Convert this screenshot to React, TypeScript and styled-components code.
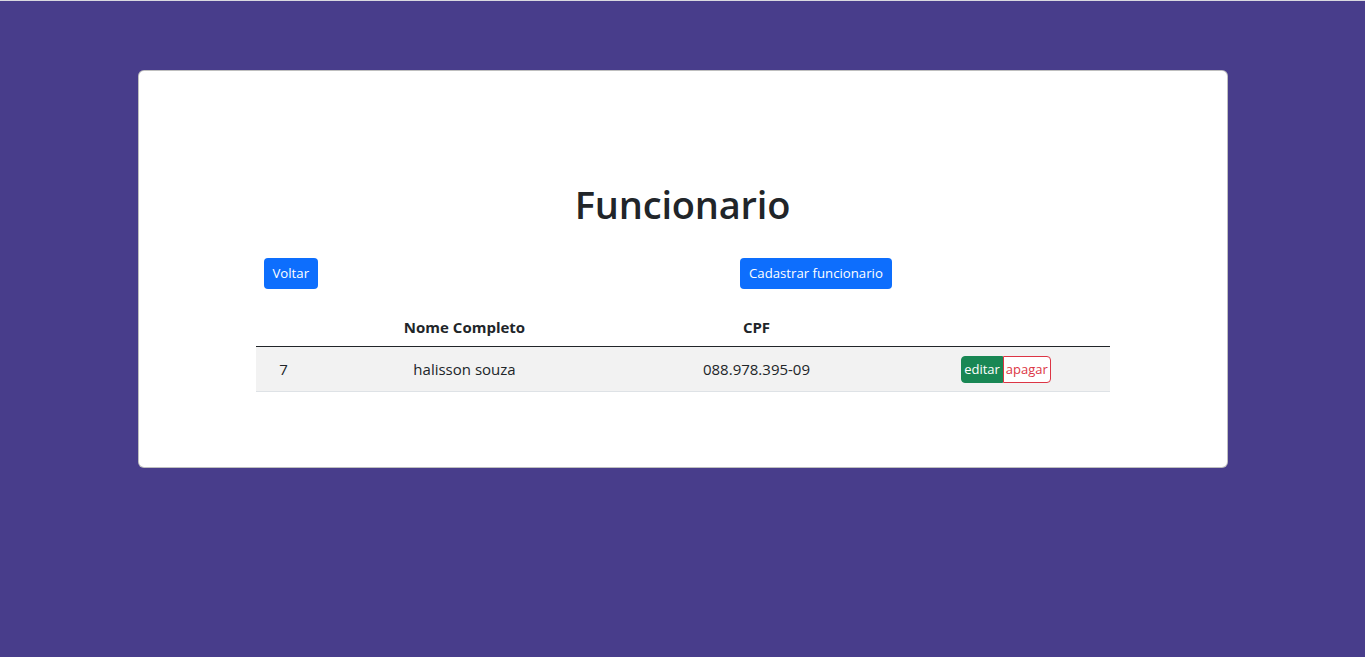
import React from 'react';
import styled, { createGlobalStyle } from 'styled-components';

const GlobalStyle = createGlobalStyle`
    html, body {
        margin: 0;
        padding: 0;
    }
    body {
        background: #483d8b;
        border-top: 1px solid #d9d9e0;
        min-height: 656px;
        font-family: "Open Sans", "Noto Sans", sans-serif;
        color: #212529;
        font-size: 16px;
    }
`;

const Page = styled.div`
    display: flex;
    justify-content: center;
    padding-top: 69px;
`;

const Card = styled.section`
    width: 1090px;
    height: 398px;
    box-sizing: border-box;
    background: white;
    border: 1px solid rgba(0, 0, 0, .25);
    border-radius: 6px;
    display: flex;
    flex-direction: column;
    align-items: center;
    padding-top: 111px;
`;

const Heading = styled.h1`
    margin: 0;
    font-size: 38px;
    font-weight: 600;
    line-height: 1.2;
    letter-spacing: -0.2px;
`;

const Inner = styled.div`
    width: 854px;
    margin-top: 30px;
`;

const Toolbar = styled.div`
    display: flex;
    align-items: center;
    padding-left: 8px;
`;

const Button = styled.button<{ offset?: number }>`
    border: none;
    background: #0d6efd;
    color: white;
    font-family: inherit;
    font-size: 13.2px;
    height: 31px;
    padding: 0 9px;
    border-radius: 4px;
    cursor: pointer;
    margin-left: ${props => props.offset ?? 0}px;
`;

const Table = styled.table`
    width: 100%;
    border-collapse: collapse;
    margin-top: 20px;
    table-layout: fixed;
`;

const HeadCell = styled.th<{ width: number }>`
    width: ${props => props.width}px;
    font-weight: 700;
    font-size: 15px;
    text-align: center;
    padding: 8px 0 9px;
    border-bottom: 1px solid #212529;
`;

const Row = styled.tr`
    background: #f2f2f2;
    border-bottom: 1px solid #dee2e6;
`;

const Cell = styled.td`
    text-align: center;
    font-size: 15px;
    height: 44px;
    padding: 0;
    vertical-align: middle;
`;

const ActionGroup = styled.div`
    display: inline-flex;
    margin-left: 7px;
    margin-top: 1px;
`;

const ActionButton = styled.button<{ tone: 'edit' | 'delete' }>`
    font-family: inherit;
    font-size: 13px;
    height: 27px;
    padding: 0 2px;
    cursor: pointer;
    border: 1px solid ${props => props.tone === 'edit' ? '#198754' : '#dc3545'};
    background: ${props => props.tone === 'edit' ? '#198754' : 'white'};
    color: ${props => props.tone === 'edit' ? 'white' : '#dc3545'};
    border-radius: ${props => props.tone === 'edit' ? '4px 0 0 4px' : '0 4px 4px 0'};
`;

interface IFuncionario
{
    id : number;
    nome : string;
    cpf : string;
}

const funcionarios : IFuncionario[] = [
    { id: 7, nome: 'halisson souza', cpf: '088.978.395-09' },
];

export default function App()
{
    return (
        <React.Fragment>
            <GlobalStyle />
            <Page>
                <Card>
                    <Heading>Funcionario</Heading>
                    <Inner>
                        <Toolbar>
                            <Button>Voltar</Button>
                            <Button offset={422}>Cadastrar funcionario</Button>
                        </Toolbar>
                        <Table>
                            <thead>
                                <tr>
                                    <HeadCell width={56}></HeadCell>
                                    <HeadCell width={306}>Nome Completo</HeadCell>
                                    <HeadCell width={278}>CPF</HeadCell>
                                    <HeadCell width={214}></HeadCell>
                                </tr>
                            </thead>
                            <tbody>
                                {funcionarios.map(f => (
                                    <Row key={f.id}>
                                        <Cell>{f.id}</Cell>
                                        <Cell>{f.nome}</Cell>
                                        <Cell>{f.cpf}</Cell>
                                        <Cell>
                                            <ActionGroup>
                                                <ActionButton tone="edit">editar</ActionButton>
                                                <ActionButton tone="delete">apagar</ActionButton>
                                            </ActionGroup>
                                        </Cell>
                                    </Row>
                                ))}
                            </tbody>
                        </Table>
                    </Inner>
                </Card>
            </Page>
        </React.Fragment>
    );
}
